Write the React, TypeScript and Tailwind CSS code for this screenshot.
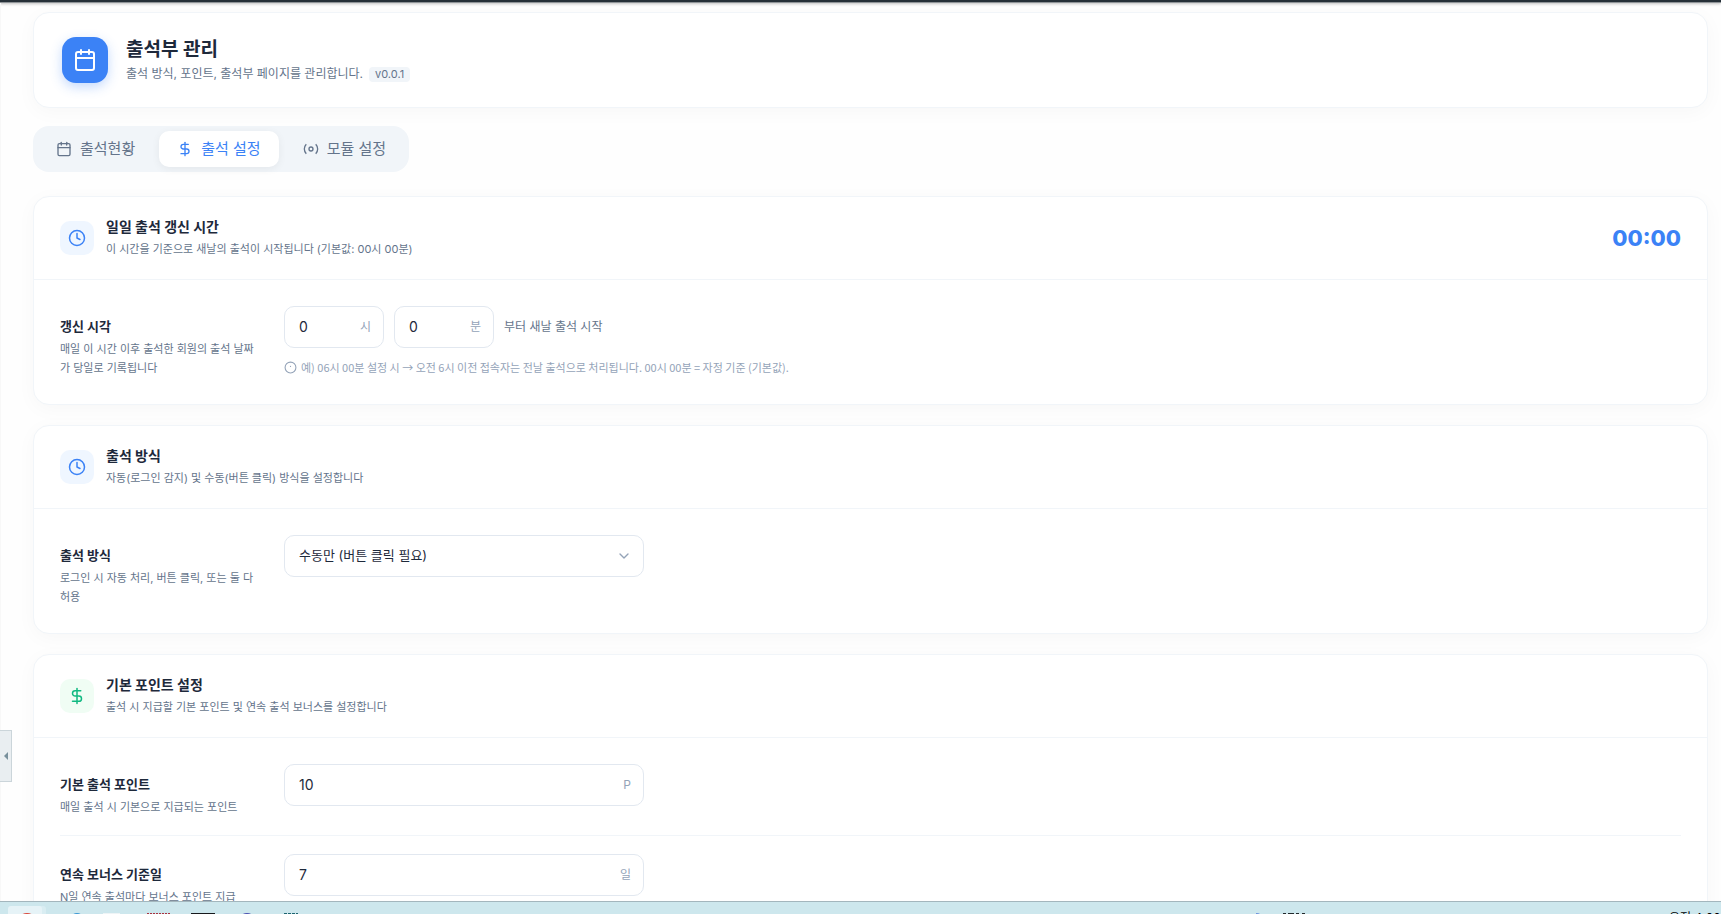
import type { ReactNode } from "react";
import { Calendar, ChevronDown, Clock, DollarSign } from "lucide-react";

function ModuleIcon() {
  return (
    <svg className="size-4" viewBox="0 0 24 24" fill="none" stroke="currentColor" strokeWidth="2" aria-hidden="true">
      <circle cx="12" cy="12" r="3" />
      <path d="M19.07 4.93a10 10 0 0 1 0 14.14M4.93 4.93a10 10 0 0 0 0 14.14" />
    </svg>
  );
}

function HintIcon() {
  return (
    <svg className="size-[13px] shrink-0" viewBox="0 0 24 24" fill="none" stroke="currentColor" strokeWidth="2" aria-hidden="true">
      <circle cx="12" cy="12" r="10" />
      <path d="M12 9v2" />
    </svg>
  );
}

type CardProps = {
  icon: ReactNode;
  tone: string;
  title: string;
  description: string;
  aside?: ReactNode;
  children: ReactNode;
};

function Card({ icon, tone, title, description, aside, children }: CardProps) {
  return (
    <section className="rounded-2xl border border-[#f1f5f9] bg-white shadow-[0_4px_20px_rgba(0,0,0,0.03)]">
      <header className="flex items-center gap-3 border-b border-[#f1f5f9] px-[26px] py-5">
        <div className={`flex size-[34px] shrink-0 items-center justify-center rounded-[10px] ${tone}`}>{icon}</div>
        <div className="flex-1">
          <h2 className="text-[14px] leading-[20px] font-bold text-[#1e293b]">{title}</h2>
          <p className="mt-0.5 text-[11px] leading-[20px] text-[#64748b]">{description}</p>
        </div>
        {aside}
      </header>
      <div className="divide-y divide-[#f1f5f9] px-[26px] py-2">{children}</div>
    </section>
  );
}

type RowProps = { id: string; label: string; description: string; children: ReactNode };

function Row({ id, label, description, children }: RowProps) {
  return (
    <div className="flex gap-6 py-[18px]">
      <div className="w-[200px] shrink-0 pt-2.5">
        <label htmlFor={id} className="block text-[13px] leading-[20px] font-bold text-[#1e293b]">
          {label}
        </label>
        <p className="mt-1 text-[11px] leading-[19px] break-all text-[#64748b]">{description}</p>
      </div>
      <div className="min-w-0 flex-1">{children}</div>
    </div>
  );
}

type UnitInputProps = { id: string; value: string; unit: string; width: string; label?: string };

function UnitInput({ id, value, unit, width, label }: UnitInputProps) {
  return (
    <div className={`flex h-[42px] items-center rounded-[10px] border border-[#e2e8f0] bg-white pr-3 pl-3.5 ${width}`}>
      <input
        id={id}
        aria-label={label}
        defaultValue={value}
        inputMode="numeric"
        className="min-w-0 flex-1 bg-transparent text-[14px] leading-[20px] text-[#1e293b] outline-none"
      />
      <span className="text-[12px] leading-[20px] text-[#94a3b8]">{unit}</span>
    </div>
  );
}

const tabClass = "flex h-9 items-center gap-2 rounded-[10px] px-[18px] text-[15px]";

export default function App() {
  return (
    <div className="flex h-screen flex-col overflow-hidden bg-[#fefefe] font-[Inter,'Noto_Sans_CJK_KR',sans-serif]">
      <div className="h-[3px] shrink-0 border-b border-[#8f9498] bg-[#263038] shadow-[0_1px_3px_rgba(0,0,0,0.25)]" />

      <main className="min-h-0 flex-1 overflow-hidden border-l border-[#f8f8f8] pt-[9px] pr-[13px] pl-8">
        <header className="flex items-center gap-[18px] rounded-2xl border border-[#f1f5f9] bg-white px-7 py-6 shadow-[0_4px_20px_rgba(0,0,0,0.03)]">
          <div className="flex size-[46px] shrink-0 items-center justify-center rounded-[14px] bg-[#3b82f6] text-white shadow-[0_4px_12px_rgba(59,130,246,0.3)]">
            <Calendar size={24} strokeWidth={2} />
          </div>
          <div>
            <h1 className="text-[19px] leading-[26px] font-bold text-[#1e293b]">출석부 관리</h1>
            <p className="mt-0.5 flex items-center gap-1.5 text-[12px] leading-[18px] text-[#64748b]">
              출석 방식, 포인트, 출석부 페이지를 관리합니다.
              <span className="rounded-[4px] bg-[#f1f5f9] px-1.5 text-[11px] leading-[15px]">v0.0.1</span>
            </p>
          </div>
        </header>

        <nav className="mt-[18px] flex w-fit gap-1.5 rounded-2xl bg-[#f1f5f9] p-[5px] text-[#64748b]">
          <button type="button" className={tabClass}>
            <Calendar size={16} />
            출석현황
          </button>
          <button type="button" className={`${tabClass} bg-white text-[#3b82f6] shadow-[0_2px_8px_rgba(0,0,0,0.06)]`}>
            <DollarSign size={16} />
            출석 설정
          </button>
          <button type="button" className={tabClass}>
            <ModuleIcon />
            모듈 설정
          </button>
        </nav>

        <div className="mt-6 flex flex-col gap-5">
          <Card
            icon={<Clock size={18} />}
            tone="bg-[#eff6ff] text-[#3b82f6]"
            title="일일 출석 갱신 시간"
            description="이 시간을 기준으로 새날의 출석이 시작됩니다 (기본값: 00시 00분)"
            aside={<output className="text-[22px] leading-[28px] font-extrabold text-[#3b82f6]">00:00</output>}
          >
            <Row id="reset-hour" label="갱신 시각" description="매일 이 시간 이후 출석한 회원의 출석 날짜가 당일로 기록됩니다">
              <div className="flex items-center gap-2.5">
                <UnitInput id="reset-hour" value="0" unit="시" width="w-[100px]" />
                <UnitInput id="reset-minute" value="0" unit="분" width="w-[100px]" label="분" />
                <span className="text-[12px] leading-[20px] text-[#64748b]">부터 새날 출석 시작</span>
              </div>
              <p className="mt-2.5 flex items-center gap-1 font-['Noto_Sans_CJK_KR',sans-serif] text-[11px] leading-[18px] text-[#94a3b8]">
                <HintIcon />
                예) 06시 00분 설정 시 → 오전 6시 이전 접속자는 전날 출석으로 처리됩니다. 00시 00분 = 자정 기준 (기본값).
              </p>
            </Row>
          </Card>

          <Card
            icon={<Clock size={18} />}
            tone="bg-[#eff6ff] text-[#3b82f6]"
            title="출석 방식"
            description="자동(로그인 감지) 및 수동(버튼 클릭) 방식을 설정합니다"
          >
            <Row id="check-mode" label="출석 방식" description="로그인 시 자동 처리, 버튼 클릭, 또는 둘 다 허용">
              <div className="grid w-[360px] items-center">
                <select
                  id="check-mode"
                  className="col-start-1 row-start-1 h-[42px] appearance-none rounded-[10px] border border-[#e2e8f0] bg-white px-3.5 text-[13px] text-[#1e293b]"
                >
                  <option>수동만 (버튼 클릭 필요)</option>
                  <option>자동만</option>
                  <option>자동 + 수동</option>
                </select>
                <ChevronDown
                  size={16}
                  strokeWidth={2}
                  className="pointer-events-none col-start-1 row-start-1 mr-3 justify-self-end text-[#94a3b8]"
                />
              </div>
            </Row>
          </Card>

          <Card
            icon={<DollarSign size={18} />}
            tone="bg-[#f0fdf4] text-[#10b981]"
            title="기본 포인트 설정"
            description="출석 시 지급할 기본 포인트 및 연속 출석 보너스를 설정합니다"
          >
            <Row id="base-point" label="기본 출석 포인트" description="매일 출석 시 기본으로 지급되는 포인트">
              <UnitInput id="base-point" value="10" unit="P" width="w-[360px]" />
            </Row>
            <Row id="bonus-day" label="연속 보너스 기준일" description="N일 연속 출석마다 보너스 포인트 지급">
              <UnitInput id="bonus-day" value="7" unit="일" width="w-[360px]" />
            </Row>
          </Card>
        </div>
      </main>

      <button
        type="button"
        aria-label="사이드바 접기"
        className="absolute top-[730px] left-0 flex h-[52px] w-3 items-center justify-center border border-l-0 border-[#cbd5da] bg-[#e9eef1]"
      >
        <svg className="h-2 w-1" viewBox="0 0 4 8" fill="#78909c" aria-hidden="true">
          <path d="M4 0v8L0 4z" />
        </svg>
      </button>

      <footer className="relative flex h-[13px] shrink-0 items-start overflow-hidden border-t border-[#a3b6bd] bg-[#cde7ed]">
        <svg className="h-3 w-[320px]" viewBox="0 0 320 12" aria-hidden="true">
          <rect x="10" y="4" width="36" height="20" rx="3" fill="#d9edf2" />
          <rect x="8" y="4" width="34" height="20" rx="3" fill="#e6f3f7" />
          <circle cx="27" cy="21" r="10" fill="#d9473a" />
          <circle cx="77" cy="18" r="7" fill="#3b97d3" />
          <rect x="103" y="11" width="17" height="4" fill="#eef4f6" />
          <path d="M147 11.5h24" stroke="#a83240" strokeWidth="1" strokeDasharray="2 1" />
          <rect x="191" y="11" width="24" height="4" fill="#17191c" />
          <circle cx="247" cy="20" r="9" fill="#4a50b0" />
          <path d="M284 11.5h14" stroke="#1d6470" strokeWidth="1" strokeDasharray="3 1" />
        </svg>
        <div className="flex-1" />
        <svg className="h-3 w-[413px]" viewBox="0 0 413 12" aria-hidden="true">
          <circle cx="1" cy="16" r="5" fill="#6f95dd" />
          <path d="M27 11.5h3m2 0h6m2 0h3m3 0h3" stroke="#22292c" strokeWidth="1" />
        </svg>
        <span className="mt-2 mr-1 w-12 shrink-0 text-[12px] leading-[16px] whitespace-nowrap text-black">오전 4:00</span>
      </footer>
    </div>
  );
}
